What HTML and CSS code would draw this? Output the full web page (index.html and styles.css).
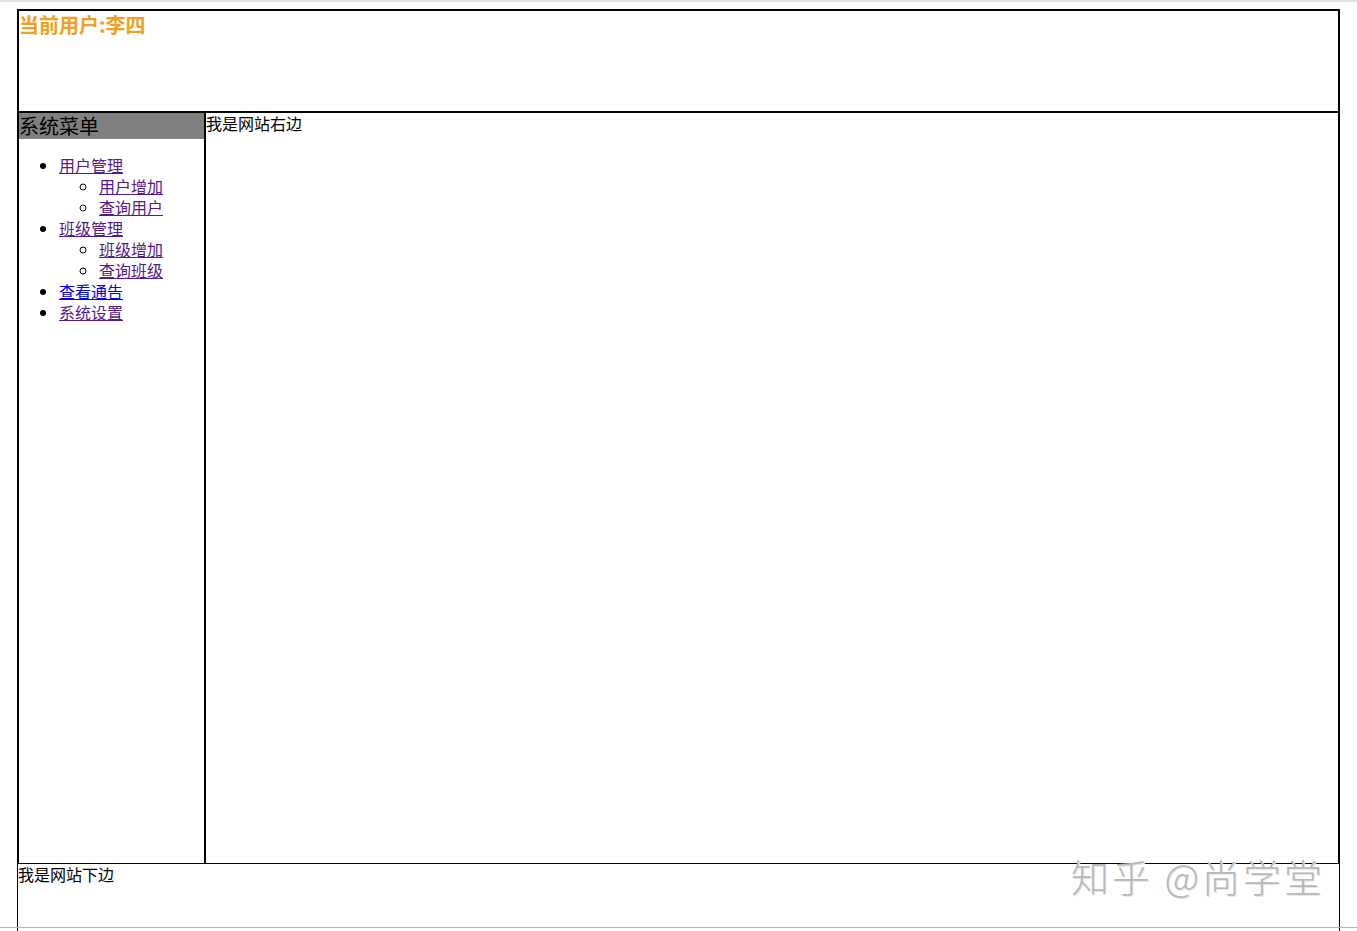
FILE: index.html
```html
<!DOCTYPE html>
<html lang="zh">
<head>
<meta charset="utf-8">
<title>frameset</title>
<link rel="stylesheet" href="styles.css">
</head>
<body>
<div class="topline"></div>
<div class="page">
  <div class="top">
    <h3 class="user">当前用户:李四</h3>
  </div>
  <div class="middle">
    <div class="left">
      <div class="menu-title">系统菜单</div>
      <ul class="menu">
        <li><a class="visited" href="#">用户管理</a>
          <ul>
            <li><a class="visited" href="#">用户增加</a></li>
            <li><a class="visited" href="#">查询用户</a></li>
          </ul>
        </li>
        <li><a class="visited" href="#">班级管理</a>
          <ul>
            <li><a class="visited" href="#">班级增加</a></li>
            <li><a class="visited" href="#">查询班级</a></li>
          </ul>
        </li>
        <li><a class="fresh" href="#">查看通告</a></li>
        <li><a class="visited" href="#">系统设置</a></li>
      </ul>
    </div>
    <div class="right">我是网站右边</div>
  </div>
  <div class="bottom">我是网站下边</div>
</div>
<div class="redline"></div>
<div class="watermark">知乎 @尚学堂</div>
</body>
</html>
```

FILE: styles.css
```css
html, body {
  margin: 0;
  padding: 0;
  background: #fff;
  font-family: "Noto Sans CJK SC", "Liberation Sans", sans-serif;
  font-size: 16px;
  color: #000;
  overflow: hidden;
}
.topline {
  height: 2px;
  background: #e4e4e4;
}
.page {
  margin: 7px 0 0 17px;
  width: 1323px;
}
.top {
  height: 100px;
  border: 2px solid #000;
}
.user {
  margin: 0;
  padding-left: 0;
  font-size: 20px;
  line-height: 28px;
  font-weight: bold;
  color: #f0a020;
}
.middle {
  display: flex;
  height: 750px;
  border-left: 2px solid #000;
  border-right: 2px solid #000;
  border-bottom: 1px solid #000;
}
.left {
  width: 185px;
  border-right: 2px solid #000;
  flex: none;
}
.menu-title {
  background: #808080;
  font-size: 20px;
  line-height: 26px;
  height: 26px;
  color: #000;
}
.menu {
  margin: 16px 0;
  padding-left: 40px;
  line-height: 21px;
  list-style: disc;
}
.menu ul {
  margin: 0;
  padding-left: 40px;
  list-style: circle;
}
.menu a {
  text-decoration: underline;
}
.menu a.visited {
  color: #551a8b;
}
.menu a.fresh {
  color: #0000ee;
}
.right {
  flex: 1;
  line-height: 21px;
}
.bottom {
  height: 67px;
  border-left: 1px solid #000;
  border-right: 1px solid #000;
  line-height: 21px;
  margin-left: 0;
  width: 1321px;
}
.redline {
  position: absolute;
  left: 0;
  top: 927px;
  width: 1357px;
  height: 1px;
  background: #e2a2a2;
}
.watermark {
  position: absolute;
  left: 1071px;
  top: 851px;
  font-size: 38px;
  font-weight: 300;
  line-height: 50px;
  letter-spacing: 3px;
  color: #b8b8b8;
  text-shadow: 1px 1px 0 #e6e6e6;
  white-space: nowrap;
}
```
